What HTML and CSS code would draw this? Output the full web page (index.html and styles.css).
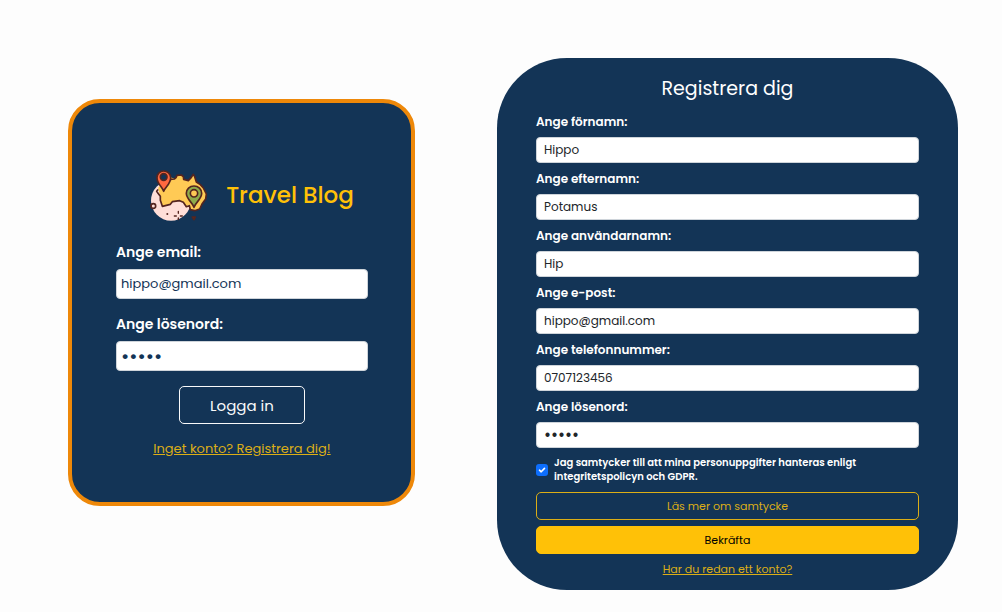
FILE: index.html
```html
<!DOCTYPE html>
<html lang="sv">
<head>
<meta charset="utf-8">
<meta name="viewport" content="width=device-width, initial-scale=1">
<title>Travel Blog</title>
<link rel="stylesheet" href="styles.css">
</head>
<body>
<main class="page">
  <form class="card login" id="login">
    <div class="brand">
      <svg class="logo" viewBox="30 24 174 162" aria-hidden="true">
        <circle cx="93" cy="122" r="60" fill="#ffded8"/>
        <path d="M54 84 L78 58 L92 52 L103 56 L108 52 L111 46 L124 45 L130 50 L131 58 L145 62 L154 52 L160 43 L164 50 L169 66 L181 74 L190 84 L199 102 L197 117 L186 132 L179 147 L164 152 L151 149 L145 136 L137 139 L130 127 L119 122 L97 125 L91 133 L67 139 L61 121 L61 109Z" fill="#ffca55"/>
        <g fill="none" stroke="#55251f" stroke-width="5" stroke-linecap="round" stroke-linejoin="round">
          <path d="M92 58 L103 57 L108 53 L111 46 L124 45 L130 50 L131 58 L145 62 L154 52 L160 43 L164 50 L169 66 L181 74 L190 84 L199 102 L197 117 L186 132 L179 147 L164 152 L151 149 L148 137 L139 140 L130 127 L119 122 L97 125 L91 133 L67 139 L61 121 L61 109 L54 100 L50 94 L53 90"/>
          <path d="M71 94 C67 80 51 72 51 53 C51 41 60 33 71 33 S92 41 92 53 C92 72 76 80 71 94Z" fill="#ff6840"/>
          <circle cx="71" cy="51" r="10" fill="#133456"/>
          <path d="M162 142 C158 127 139 118 139 100 C139 87 149 78 162 78 S185 87 185 100 C185 118 166 127 162 142Z" fill="#8fac4b"/>
          <circle cx="162" cy="100" r="11" fill="#ffca55"/>
          <circle cx="40" cy="138" r="7" fill="#ffded8"/>
          <path d="M157 171 H166 L162 179Z" fill="#e69a43"/>
          <path d="M115 154 V160 M115 174 V179 M103 168 H109 M121 168 H127" stroke-width="4"/>
        </g>
        <circle cx="82" cy="162" r="3" fill="#55251f"/>
      </svg>
      <h1 class="brand-name">Travel Blog</h1>
    </div>
    <div class="field">
      <label for="login-email">Ange email:</label>
      <input id="login-email" type="email" value="hippo@gmail.com">
    </div>
    <div class="field">
      <label for="login-password">Ange lösenord:</label>
      <input id="login-password" type="password" value="hippo">
    </div>
    <button class="button login-button" type="submit">Logga in</button>
    <a class="link" href="#register">Inget konto? Registrera dig!</a>
  </form>

  <form class="card register" id="register">
    <h2 class="title">Registrera dig</h2>
    <div class="field">
      <label for="first-name">Ange förnamn:</label>
      <input id="first-name" type="text" value="Hippo">
    </div>
    <div class="field">
      <label for="last-name">Ange efternamn:</label>
      <input id="last-name" type="text" value="Potamus">
    </div>
    <div class="field">
      <label for="username">Ange användarnamn:</label>
      <input id="username" type="text" value="Hip">
    </div>
    <div class="field">
      <label for="email">Ange e-post:</label>
      <input id="email" type="email" value="hippo@gmail.com">
    </div>
    <div class="field">
      <label for="phone">Ange telefonnummer:</label>
      <input id="phone" type="tel" value="0707123456">
    </div>
    <div class="field">
      <label for="password">Ange lösenord:</label>
      <input id="password" type="password" value="hippo">
    </div>
    <div class="consent">
      <span class="check">
        <input id="consent" type="checkbox" checked>
        <svg class="tick" viewBox="0 0 12 12" aria-hidden="true"><path d="M3.5 6.2 L5.2 7.8 L8.5 4.4" fill="none" stroke="#fff" stroke-width="1.6" stroke-linecap="round" stroke-linejoin="round"/></svg>
      </span>
      <label for="consent">Jag samtycker till att mina personuppgifter hanteras enligt integritetspolicyn och GDPR.</label>
    </div>
    <div class="actions">
      <button class="button outline" type="button">Läs mer om samtycke</button>
      <button class="button solid" type="submit">Bekräfta</button>
    </div>
    <a class="link" href="#login">Har du redan ett konto?</a>
  </form>
</main>
</body>
</html>
```
FILE: styles.css
```css
* {
  box-sizing: border-box;
}

body {
  margin: 0;
  background: #fdfdfd;
  font-family: Poppins, Inter, sans-serif;
}

.page {
  display: grid;
  grid-template-columns: 347fr 461fr;
  gap: 82px;
  align-items: start;
  padding: 58px 44px 22px 68px;
}

.card {
  display: flex;
  flex-direction: column;
  background: #133456;
  color: #fff;
}

.field {
  display: flex;
  flex-direction: column;
}

.field label {
  font-weight: 600;
}

.field input {
  width: 100%;
  border: 1px solid #ced4da;
  border-radius: 4px;
  background: #fff;
  font-family: inherit;
}

.button {
  border: 1px solid;
  border-radius: 5px;
  font-family: inherit;
}

.link {
  align-self: center;
  color: #dcae16;
}

.login {
  margin-top: 41px;
  padding: 65px 43px 43px 44px;
  border: 4px solid #ee8809;
  border-radius: 32px;
}

.brand {
  display: flex;
  align-items: center;
  justify-content: center;
  gap: 18px;
  margin-bottom: 20px;
  padding-left: 20px;
}

.logo {
  width: 58px;
  height: 54px;
}

.brand-name {
  margin: 0;
  color: #ffc107;
  font-size: 23px;
  font-weight: 500;
  line-height: 30px;
}

.login .field {
  gap: 7px;
  margin-bottom: 15px;
}

.login .field label {
  font-size: 14px;
  line-height: 20px;
}

.login .field input {
  height: 30px;
  padding: 0 4px;
  color: #133456;
  font-size: 13px;
}

.login .field input[type="password"] {
  font-size: 20px;
}

.login-button {
  align-self: center;
  width: 50%;
  height: 38px;
  margin-bottom: 15px;
  border-color: #f8f9fa;
  background: transparent;
  color: #f8f9fa;
  font-size: 15px;
}

.login .link {
  font-size: 13px;
  line-height: 20px;
}

.register {
  padding: 15px 39px 12px;
  border-radius: 70px;
}

.title {
  margin: 0 0 8px;
  font-size: 19px;
  font-weight: 400;
  line-height: 32px;
  text-align: center;
}

.register .field {
  gap: 6px;
  margin-bottom: 7px;
}

.register .field label {
  font-size: 12px;
  line-height: 18px;
}

.register .field input {
  height: 26px;
  padding: 0 7px;
  color: #212529;
  font-size: 12px;
}

.register .field input[type="password"] {
  font-size: 17px;
}

.consent {
  display: flex;
  align-items: center;
  gap: 6px;
  margin: 1px 0 8px;
}

.consent label {
  max-width: 320px;
  font-size: 10px;
  font-weight: 600;
  line-height: 14px;
}

.check {
  display: grid;
  flex: none;
}

.check input,
.tick {
  grid-area: 1 / 1;
  width: 12px;
  height: 12px;
}

.check input {
  appearance: none;
  margin: 0;
  border-radius: 3px;
  background: #0d6efd;
}

.tick {
  pointer-events: none;
}

.actions {
  display: flex;
  flex-direction: column;
  gap: 6px;
  margin-bottom: 6px;
}

.actions .button {
  height: 28px;
  font-size: 11px;
}

.outline {
  border-color: #dcae16;
  background: transparent;
  color: #dcae16;
}

.solid {
  border-color: #ffc107;
  background: #ffc107;
  color: #000;
}

.register .link {
  font-size: 11px;
  line-height: 18px;
}
```
